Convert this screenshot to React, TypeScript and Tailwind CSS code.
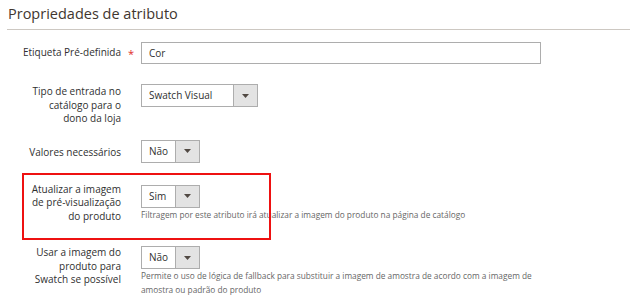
import React from 'react'

function Select({ value, width }: { value: string; width: string }) {
  return (
    <div className={`flex h-[23px] ${width} border border-[#adadad] bg-white`}>
      <div className="flex-1 pl-[7px] text-[10px] leading-[21px] text-[#303030]">{value}</div>
      <div className="flex w-[24px] items-center justify-center border-l border-[#adadad] bg-[#e3e3e3]">
        <svg width="7" height="4" viewBox="0 0 7 4">
          <path d="M0 0h7L3.5 4z" fill="#514943" />
        </svg>
      </div>
    </div>
  )
}

function Label({ children, pt }: { children: React.ReactNode; pt: string }) {
  return (
    <div className={`w-[100px] shrink-0 text-right text-[10px] leading-[13.5px] text-[#303030] ${pt}`}>
      {children}
    </div>
  )
}

export default function App() {
  return (
    <div className="h-[308px] w-[630px] overflow-hidden bg-white font-['Open_Sans',sans-serif]">
      <div className="pl-2 pt-[4px] text-[14.5px] leading-[20px] text-[#41362f]">Propriedades de atributo</div>
      <div className="ml-[7px] mt-[5px] border-b border-[#cdc8c2]" />

      {/* Etiqueta */}
      <div className="ml-[21px] mt-[12px] flex">
        <Label pt="pt-[4px]">Etiqueta Pré-definida</Label>
        <div className="w-[20px] pt-[5px] text-center text-[11px] leading-[13px] text-[#e02b27]">*</div>
        <div className="h-[22px] w-[400px] border border-[#adadad] pl-[7px] text-[10px] leading-[20px] text-[#303030]">Cor</div>
      </div>

      {/* Tipo de entrada */}
      <div className="ml-[21px] mt-[20px] flex">
        <Label pt="pt-[1px]">
          Tipo de entrada no
          <br />
          catálogo para o
          <br />
          dono da loja
        </Label>
        <div className="w-[20px]" />
        <Select value="Swatch Visual" width="w-[117px]" />
      </div>

      {/* Valores necessários */}
      <div className="ml-[21px] mt-[14px] flex">
        <Label pt="pt-[6px]">Valores necessários</Label>
        <div className="w-[20px]" />
        <Select value="Não" width="w-[59px]" />
      </div>

      {/* Atualizar a imagem */}
      <div className="relative ml-[21px] mt-[20px] flex">
        <div className="absolute left-[1px] top-[-10px] h-[67px] w-[249px] border-2 border-[#ee1111]" />
        <Label pt="pt-0">
          Atualizar a imagem
          <br />
          de pré-visualização
          <br />
          do produto
        </Label>
        <div className="w-[20px]" />
        <div className="pt-[2px]">
          <Select value="Sim" width="w-[59px]" />
          <div className="whitespace-nowrap text-[8.3px] leading-[14px] text-[#666666]">
            Filtragem por este atributo irá atualizar a imagem do produto na página de catálogo
          </div>
        </div>
      </div>

      {/* Usar a imagem */}
      <div className="ml-[21px] mt-[23px] flex">
        <Label pt="pt-0">
          Usar a imagem do
          <br />
          produto para
          <br />
          Swatch se possível
        </Label>
        <div className="w-[20px]" />
        <div>
          <Select value="Não" width="w-[59px]" />
          <div className="whitespace-nowrap text-[8.3px] leading-[14px] text-[#666666]">
            Permite o uso de lógica de fallback para substituir a imagem de amostra de acordo com a imagem de
            <br />
            amostra ou padrão do produto
          </div>
        </div>
      </div>
    </div>
  )
}
